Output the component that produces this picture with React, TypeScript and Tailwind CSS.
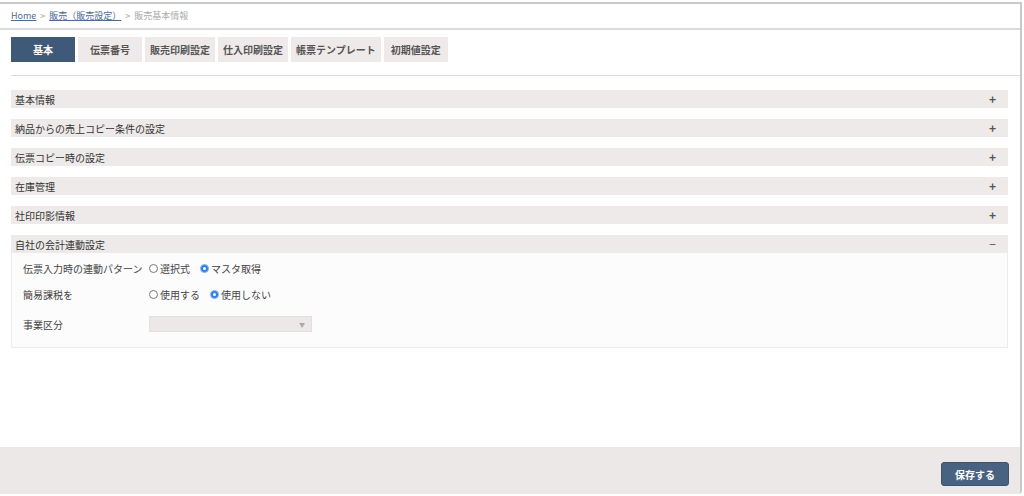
import React from 'react'

const tabs = ['基本', '伝票番号', '販売印刷設定', '仕入印刷設定', '帳票テンプレート', '初期値設定']
const sections = ['基本情報', '納品からの売上コピー条件の設定', '伝票コピー時の設定', '在庫管理', '社印印影情報']

function Radio({ label, checked }: { label: string; checked?: boolean }) {
    return (
        <label className="flex items-center gap-[2px] mr-[10px]">
            {checked ? (
                <span className="w-[9px] h-[9px] rounded-full bg-[#2f7fe6] border border-[#8fb8ee] flex items-center justify-center">
                    <span className="w-[3px] h-[3px] rounded-full bg-white" />
                </span>
            ) : (
                <span className="w-[9px] h-[9px] rounded-full border border-[#777] bg-white" />
            )}
            <span>{label}</span>
        </label>
    )
}

export default function App() {
    return (
        <div className="w-[1024px] h-[496px] bg-white overflow-hidden pt-[2px] text-[10px] text-[#333]" style={{ fontFamily: '"Noto Sans CJK JP", "Noto Sans", sans-serif' }}>
            <div className="w-[1022px] h-[492px] border-t-2 border-r-2 border-[#c9c9c9] rounded-br-[4px] flex flex-col">
                <nav className="h-[26px] px-[11px] flex items-center gap-[4px] border-b-2 border-[#dadada] text-[9px]">
                    <a className="text-[#4c6a92] underline">Home</a>
                    <span className="text-[#999]">&gt;</span>
                    <a className="text-[#4c6a92] underline">販売（販売設定）</a>
                    <span className="text-[#999]">&gt;</span>
                    <span className="text-[#aaa]">販売基本情報</span>
                </nav>
                <div className="px-[11px] pt-[7px]">
                    <div className="flex gap-[3px]">
                        {tabs.map((t, i) => (
                            <button key={t} className={`h-[25px] min-w-[64px] px-[5px] font-bold text-[10px] ${i === 0 ? 'bg-[#3f5a78] text-white' : 'bg-[#eeeae9] text-[#555]'}`}>{t}</button>
                        ))}
                    </div>
                    <div className="mt-[13px] border-b border-[#dcdcdc] mr-[-11px]" />
                </div>
                <main className="px-[11px] pr-[12px] pt-[14px] flex flex-col gap-[11px]">
                    {sections.map((s) => (
                        <div key={s} className="h-[18px] bg-[#eeeae9] flex items-center justify-between pl-[4px] pr-[12px]">
                            <span>{s}</span>
                            <span className="text-[12px] text-[#555] font-bold leading-none">+</span>
                        </div>
                    ))}
                    <div>
                        <div className="h-[18px] bg-[#eeeae9] flex items-center justify-between pl-[4px] pr-[12px]">
                            <span>自社の会計連動設定</span>
                            <span className="text-[12px] text-[#555] leading-none">−</span>
                        </div>
                        <div className="h-[95px] bg-[#fcfcfc] border border-t-0 border-[#ececec] px-[11px] pt-[7px] text-[#444]">
                            <div className="flex items-center h-[16px]">
                                <span className="w-[126px]">伝票入力時の連動パターン</span>
                                <Radio label="選択式" />
                                <Radio label="マスタ取得" checked />
                            </div>
                            <div className="flex items-center h-[16px] mt-[10px]">
                                <span className="w-[126px]">簡易課税を</span>
                                <Radio label="使用する" />
                                <Radio label="使用しない" checked />
                            </div>
                            <div className="flex items-center h-[16px] mt-[14px]">
                                <span className="w-[126px]">事業区分</span>
                                <div className="w-[163px] h-[16px] bg-[#ebe8e7] border border-[#e2dfde] flex items-center justify-end pr-[6px]">
                                    <span className="text-[6px] text-[#aaa]">▼</span>
                                </div>
                            </div>
                        </div>
                    </div>
                </main>
                <footer className="mt-auto h-[47px] bg-[#ece8e7] rounded-br-[4px] flex items-start justify-end pt-[15px] pr-[11px]">
                    <button className="w-[68px] h-[24px] bg-[#4a6282] rounded-[3px] text-white font-bold text-[10px] border border-[#3d5370]">保存する</button>
                </footer>
            </div>
        </div>
    )
}
